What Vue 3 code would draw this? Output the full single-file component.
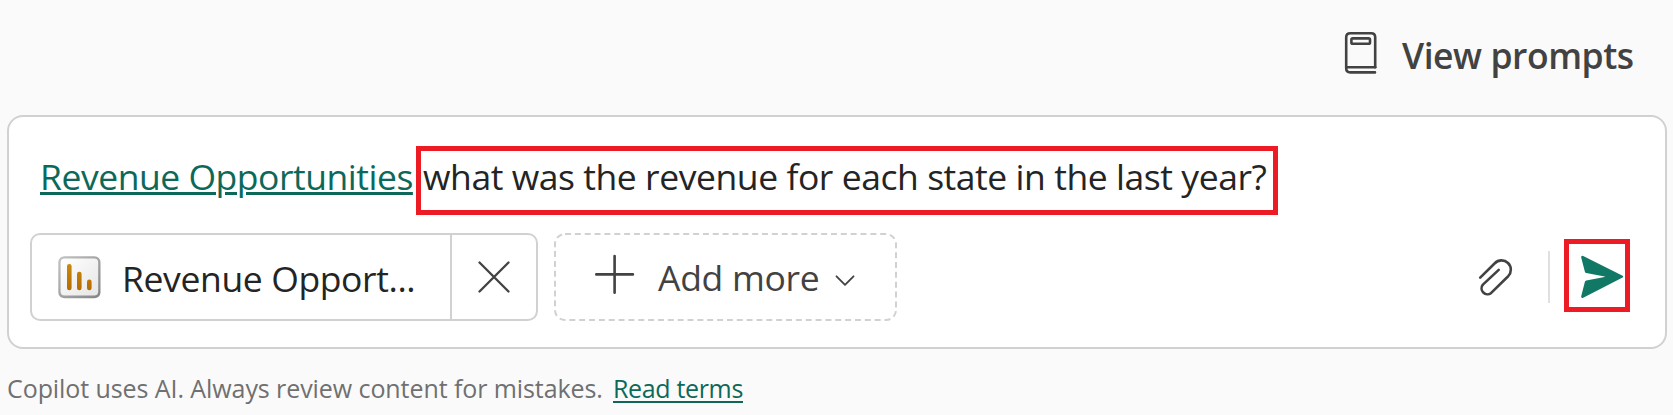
<script setup>
import { ref } from 'vue'

const source = ref('Revenue Opportunities')
const question = ref('what was the revenue for each state in the last year?')
</script>

<template>
  <main class="page">
    <header class="topbar">
      <button class="prompts" type="button">
        <svg class="book" width="34" height="44" viewBox="0 0 34 44" fill="none" stroke="#424242" stroke-width="2.6" stroke-linecap="round">
          <path d="M31.2 36.2V6.2Q31.2 2.2 27.2 2.2H6.2Q2.2 2.2 2.2 6.2V37.3Q2.2 41.4 6.2 41.4H31" />
          <path d="M2.3 36.2H31.2" />
          <rect x="7.4" y="7.4" width="18.6" height="5.4" rx="1.4" />
        </svg>
        <span class="prompts-label">View prompts</span>
      </button>
    </header>

    <section class="composer">
      <div class="query">
        <a class="source">{{ source }}</a>
        <span class="question">{{ question }}</span>
      </div>

      <div class="tools">
        <div class="chip">
          <div class="chip-main">
            <svg class="report" width="43" height="43" viewBox="0 0 43 43">
              <defs>
                <linearGradient id="edge" x1="0" y1="0" x2="1" y2="1">
                  <stop offset="0" stop-color="#c4c4c4" />
                  <stop offset="1" stop-color="#848484" />
                </linearGradient>
                <linearGradient id="face" x1="0" y1="0" x2="1" y2="1">
                  <stop offset="0" stop-color="#ffffff" />
                  <stop offset="1" stop-color="#e6e6e6" />
                </linearGradient>
                <linearGradient id="bars" gradientUnits="userSpaceOnUse" x1="0" y1="8" x2="0" y2="34">
                  <stop offset="0" stop-color="#c98a0a" />
                  <stop offset="1" stop-color="#b86a00" />
                </linearGradient>
              </defs>
              <rect x="0.3" y="0.3" width="42.2" height="42" rx="6" fill="url(#edge)" />
              <rect x="2.6" y="2.6" width="37.6" height="36.8" rx="4" fill="url(#face)" />
              <g fill="url(#bars)">
                <rect x="9" y="8" width="4.6" height="26.2" rx="2.2" />
                <rect x="19" y="15.8" width="4.6" height="18.4" rx="2.2" />
                <rect x="29" y="23.6" width="4.6" height="10.6" rx="2.2" />
              </g>
            </svg>
            <span class="chip-label">Revenue Opport...</span>
          </div>
          <button class="chip-close" type="button" aria-label="Remove">
            <svg width="32" height="32" viewBox="0 0 32 32" fill="none" stroke="#424242" stroke-width="2.3" stroke-linecap="round">
              <path d="M1.5 1.5L30.5 30.5M30.5 1.5L1.5 30.5" />
            </svg>
          </button>
        </div>

        <button class="add" type="button">
          <svg class="outline" width="343" height="88" viewBox="0 0 343 88" fill="none" stroke="#d1d1d1" stroke-width="2" stroke-dasharray="6 3.85">
            <rect x="1" y="1" width="341" height="86" rx="10" />
          </svg>
          <svg class="plus" width="40" height="40" viewBox="0 0 40 40" fill="none" stroke="#424242" stroke-width="2.6" stroke-linecap="round">
            <path d="M19.6 2.1V38.7M1.3 20.4H37.9" />
          </svg>
          <span class="add-label">Add more</span>
          <svg class="chevron" width="20" height="12" viewBox="0 0 20 12" fill="none" stroke="#424242" stroke-width="1.8" stroke-linecap="round" stroke-linejoin="round">
            <path d="M1.5 1.3L10 9.8L18.5 1.3" />
          </svg>
        </button>

        <svg class="clip" width="36" height="42" viewBox="0 0 36 42" fill="none" stroke="#424242" stroke-width="2.6" stroke-linecap="round" stroke-linejoin="round">
          <path d="M2.2 20.6L16.8 6.2A9.3 9.3 0 0 1 30.2 19.2L13.2 35.9A5.9 5.9 0 0 1 4.9 27.6L20.7 12.9" />
        </svg>
        <span class="divider"></span>
        <button class="send" type="button" aria-label="Send">
          <svg width="44" height="44" viewBox="0 0 44 44">
            <path d="M3.2 1.1L42.6 20.7Q44 21.7 42.6 22.6L3.2 42.8Q.9 43.6 1.2 41.2L4.9 26.7Q5.2 25.7 6.3 25.5L24.6 22.1Q25.4 21.8 24.6 21.4L6.3 18.1Q5.2 17.9 4.9 16.8L1.2 2.6Q.9 .2 3.2 1.1Z" fill="#117865" />
          </svg>
        </button>
      </div>
    </section>

    <footer class="note">
      <span class="note-text">Copilot uses AI. Always review content for mistakes.</span>
      <a class="terms">Read terms</a>
    </footer>
  </main>
</template>

<style>
body {
  background: #fafafa;
}
</style>

<style scoped>
.page {
  width: 1673px;
  height: 415px;
  box-sizing: border-box;
  overflow: hidden;
  background: #fafafa;
  color: #242424;
  font-family: "Open Sans", "Noto Sans", sans-serif;
  font-size: 35.5px;
  font-weight: 380;
  line-height: 48px;
  white-space: nowrap;
}

button {
  margin: 0;
  padding: 0;
  border: 0;
  background: none;
  color: #424242;
  font: inherit;
}

svg {
  display: block;
  flex: none;
}

.topbar {
  display: flex;
  justify-content: flex-end;
  height: 115px;
  box-sizing: border-box;
  padding: 30px 39px 0 0;
}

.prompts {
  display: flex;
  align-items: flex-start;
  gap: 24px;
  height: 48px;
}

.book {
  margin-top: 1px;
}

.prompts-label {
  width: 232px;
  padding-top: 1px;
  font-weight: 600;
  letter-spacing: -0.45px;
  text-align: left;
}

.composer {
  height: 234px;
  margin: 0 6px 0 7px;
  box-sizing: border-box;
  padding: 29px 35px 0 21px;
  border: 2px solid #d1d1d1;
  border-radius: 16px;
  background: #fff;
}

.query {
  display: flex;
  align-items: flex-start;
  height: 69px;
  padding-left: 10px;
}

.source {
  width: 373px;
  margin: 6px 3px 0 0;
  color: #0c695a;
  letter-spacing: -0.47px;
  text-decoration: underline;
  text-decoration-thickness: 3px;
  text-underline-offset: 2px;
}

.question {
  width: 862px;
  height: 69px;
  box-sizing: border-box;
  padding: 1px 0 0 2px;
  border: 5px solid #ed1c24;
  letter-spacing: -0.44px;
}

.tools {
  display: flex;
  align-items: flex-start;
  margin-top: 18px;
}

.chip {
  display: flex;
  width: 508px;
  height: 88px;
  box-sizing: border-box;
  border: 2px solid #d1d1d1;
  border-radius: 10px;
}

.chip-main {
  display: flex;
  flex: 1;
  align-items: center;
  gap: 20px;
  padding-left: 26px;
}

.report {
  margin-top: 1px;
}

.chip-label {
  margin-top: 2px;
  padding-left: 1px;
  letter-spacing: -0.38px;
}

.chip-close {
  display: flex;
  align-items: center;
  justify-content: center;
  width: 86px;
  padding-right: 1px;
  border-left: 2px solid #d1d1d1;
}

.add {
  position: relative;
  display: flex;
  align-items: flex-start;
  width: 343px;
  height: 88px;
  margin-left: 16px;
  padding-left: 41px;
}

.outline {
  position: absolute;
  inset: 0;
}

.plus {
  margin-top: 21px;
}

.add-label {
  width: 161px;
  margin: 20px 0 0 23px;
  letter-spacing: -0.3px;
  text-align: left;
}

.chevron {
  margin: 42px 0 0 16px;
}

.clip {
  margin: 24px 0 0 auto;
}

.divider {
  width: 2px;
  height: 52px;
  margin: 18px 14px 0 34px;
  background: #e0e0e0;
}

.send {
  display: flex;
  align-items: flex-start;
  width: 66px;
  height: 73px;
  margin-top: 6px;
  box-sizing: border-box;
  padding: 11px 0 0 11px;
  border: 5px solid #ed1c24;
}

.note {
  display: flex;
  gap: 10px;
  padding: 22px 0 0 7px;
  font-size: 25px;
  line-height: 34px;
}

.note-text {
  width: 596px;
  color: #707070;
  letter-spacing: -0.08px;
}

.terms {
  color: #0c695a;
  letter-spacing: -0.34px;
  text-decoration: underline;
  text-decoration-thickness: 2px;
  text-underline-offset: 3px;
}
</style>
